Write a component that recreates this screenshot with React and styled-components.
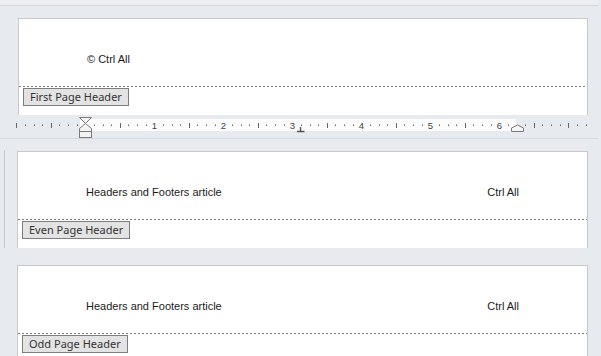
import React from 'react'
import styled, { createGlobalStyle } from 'styled-components'

const GlobalStyle = createGlobalStyle`
  html, body {
    margin: 0;
    padding: 0;
    background: #e7eaee;
  }
`

const Canvas = styled.div`
  width: 601px;
  height: 356px;
  overflow: hidden;
  background: #e7eaee;
  display: flex;
  flex-direction: column;
  font-family: "Liberation Sans", Arial, sans-serif;
`

const TopStrip = styled.div`
  flex: none;
  height: 5px;
  margin-right: 3px;
  background: #eceef1;
  border-bottom: 1px solid #d5d8dc;
`

const PageRow = styled.div`
  flex: none;
  display: flex;
  height: ${p => p.$h}px;
  margin-top: ${p => p.$gap}px;
  padding-left: ${p => p.$left}px;
  padding-right: 13px;
`

const Edge = styled.div`
  flex: none;
  width: 1px;
  margin: -1px 12px 0 -13px;
  background: #c3c7cc;
`

const Page = styled.div`
  flex: 1;
  display: flex;
  flex-direction: column;
  background: #fff;
  border: 1px solid #c6c8cb;
  border-bottom: none;
`

const HeaderBand = styled.div`
  flex: none;
  height: 67px;
  box-sizing: border-box;
  padding: 33px 68px 0 68px;
  display: flex;
  justify-content: space-between;
  font-size: 11px;
  line-height: 14px;
  color: #1b1b1b;
`

const Dashed = styled.div`
  flex: none;
  height: 1px;
  background: repeating-linear-gradient(to right, #7c7c7c 0 2px, transparent 2px 4px);
`

const Tag = styled.div`
  align-self: flex-start;
  margin: 1px 0 0 4px;
  height: 18px;
  box-sizing: border-box;
  padding: 0 6px;
  border: 1px solid #7d7d7d;
  background: #e3e3e3;
  color: #333;
  font-family: "Noto Sans", "Open Sans", sans-serif;
  font-size: 11px;
  line-height: 16px;
  white-space: nowrap;
`

const RulerBar = styled.div`
  flex: none;
  height: 23px;
  margin-right: 3px;
  border-bottom: 1px solid #d5d8dc;
  svg {
    display: block;
    overflow: visible;
  }
`

const ZERO = 85.3
const INCH = 69

function Ruler() {
  const marks = []
  for (let i = -8; i <= 60; i++) {
    const x = ZERO + (i * INCH) / 8
    if (x < 10 || x > 592) continue
    const inWhite = x > 80 && x < 516
    if (i % 8 === 0 && i > 0 && inWhite) {
      marks.push(
        <text key={i} x={x} y={13.5} fontSize="9.5" textAnchor="middle" fill="#444"
          fontFamily='"Liberation Sans", Arial, sans-serif'>{i / 8}</text>
      )
    } else if (i % 4 === 0) {
      if (i === 0 || Math.abs(x - 516) < 3) continue
      marks.push(<rect key={i} x={Math.round(x)} y={8} width={1} height={5} fill="#666" />)
    } else {
      if (Math.abs(x - 516) < 3) continue
      marks.push(<rect key={i} x={Math.round(x)} y={9.5} width={1} height={1.5} fill="#666" />)
    }
  }
  return (
    <RulerBar>
      <svg width="598" height="23" viewBox="0 0 598 23">
        <rect x="80" y="4" width="436" height="12" fill="#fcfcfc" />
        {marks}
        <path d="M297 16.5H304.5M300.5 12V16.5" stroke="#555" strokeWidth="1.4" fill="none" />
        <polygon points="79.5,2.5 91.5,2.5 85.5,8.5" fill="#f4f4f4" stroke="#7a7a7a" />
        <polygon points="85.5,8.5 91.5,13.5 91.5,16.5 79.5,16.5 79.5,13.5" fill="#f4f4f4" stroke="#7a7a7a" />
        <rect x="79.5" y="16.5" width="12" height="6" fill="#f4f4f4" stroke="#7a7a7a" />
        <polygon points="511.5,16.5 523.5,16.5 523.5,13 517.5,10 511.5,13" fill="#f4f4f4" stroke="#7a7a7a" />
      </svg>
    </RulerBar>
  )
}

export default function App() {
  return (
    <>
      <GlobalStyle />
      <Canvas>
        <TopStrip />
        <PageRow $h={97} $gap={12} $left={18}>
          <Page>
            <HeaderBand>
              <span>© Ctrl All</span>
            </HeaderBand>
            <Dashed />
            <Tag>First Page Header</Tag>
          </Page>
        </PageRow>
        <Ruler />
        <PageRow $h={97} $gap={12} $left={17}>
          <Edge />
          <Page>
            <HeaderBand>
              <span>Headers and Footers article</span>
              <span>Ctrl All</span>
            </HeaderBand>
            <Dashed />
            <Tag>Even Page Header</Tag>
          </Page>
        </PageRow>
        <PageRow $h={100} $gap={17} $left={17}>
          <Page>
            <HeaderBand>
              <span>Headers and Footers article</span>
              <span>Ctrl All</span>
            </HeaderBand>
            <Dashed />
            <Tag>Odd Page Header</Tag>
          </Page>
        </PageRow>
      </Canvas>
    </>
  )
}
